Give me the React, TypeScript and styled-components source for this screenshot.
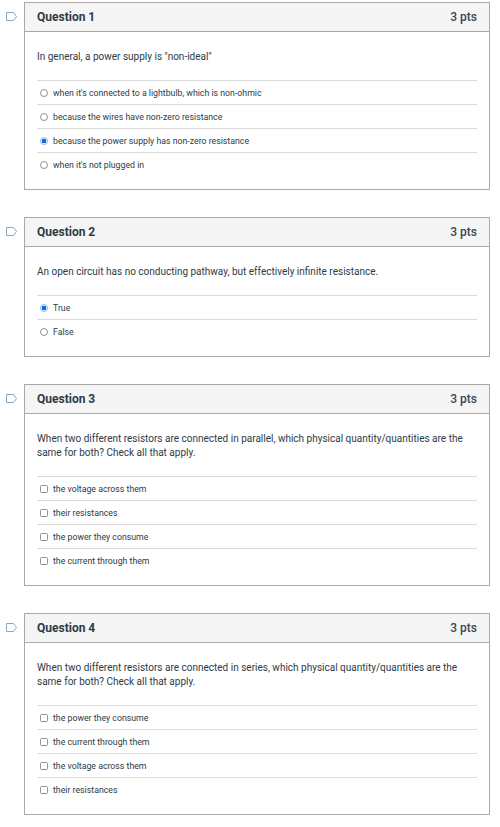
import React from 'react';
import styled, { createGlobalStyle } from 'styled-components';

const GlobalStyle = createGlobalStyle`
  html, body {
    margin: 0;
    padding: 0;
    background: #fff;
  }

  body {
    font-family: Roboto, 'Liberation Sans', Arial, sans-serif;
    color: #2d3b45;
  }
`;

const Page = styled.div`
  width: 500px;
  padding: 2px 10px 0 0;
  box-sizing: border-box;
`;

const QuestionRow = styled.div`
  display: flex;
  margin-bottom: 27px;
`;

const Flag = styled.div`
  width: 24px;
  flex: none;
  padding: 10px 0 0 6px;
  box-sizing: border-box;

  svg {
    display: block;
  }
`;

const Card = styled.div`
  flex: 1;
  border: 1px solid #a9a9a9;
  background: #fff;
`;

const Header = styled.div`
  height: 28px;
  background: #f5f5f5;
  border-bottom: 1px solid #a9a9a9;
  display: flex;
  justify-content: space-between;
  align-items: center;
  padding: 0 12px;

  h3 {
    margin: 0;
    font-size: 12px;
    font-weight: 700;
    color: #2d3b45;
  }

  .points {
    font-size: 12px;
    font-weight: 500;
    color: #3b4650;
  }
`;

const Body = styled.div`
  padding: 18px 12px 13px;
`;

const Prompt = styled.p`
  margin: 0 0 16px;
  font-size: 10px;
  line-height: 14px;
  color: #2d3b45;
`;

const Answer = styled.div`
  height: 23px;
  border-top: 1px solid #dcdcdc;
  display: flex;
  align-items: center;
  gap: 5px;
  padding-left: 3px;
  font-size: 8.75px;
  color: #2d3b45;
`;

const Control = styled.span<{ $type: 'radio' | 'checkbox'; $checked?: boolean }>`
  width: 8px;
  height: 8px;
  flex: none;
  box-sizing: border-box;
  border-radius: ${(p) => (p.$type === 'radio' ? '50%' : '1.5px')};
  border: 1px solid ${(p) => (p.$checked ? '#8fb8f0' : '#8d959a')};
  background: ${(p) =>
    p.$checked ? 'radial-gradient(circle, #0b6fe3 0 2.2px, #fff 2.6px)' : '#fff'};
`;

interface Question {
  title: string;
  prompt: string;
  type: 'radio' | 'checkbox';
  answers: string[];
  selected?: number;
}

const questions: Question[] = [
  {
    title: 'Question 1',
    prompt: 'In general, a power supply is "non-ideal"',
    type: 'radio',
    answers: [
      "when it's connected to a lightbulb, which is non-ohmic",
      'because the wires have non-zero resistance',
      'because the power supply has non-zero resistance',
      "when it's not plugged in",
    ],
    selected: 2,
  },
  {
    title: 'Question 2',
    prompt: 'An open circuit has no conducting pathway, but effectively infinite resistance.',
    type: 'radio',
    answers: ['True', 'False'],
    selected: 0,
  },
  {
    title: 'Question 3',
    prompt:
      'When two different resistors are connected in parallel, which physical quantity/quantities are the same for both? Check all that apply.',
    type: 'checkbox',
    answers: [
      'the voltage across them',
      'their resistances',
      'the power they consume',
      'the current through them',
    ],
  },
  {
    title: 'Question 4',
    prompt:
      'When two different resistors are connected in series, which physical quantity/quantities are the same for both? Check all that apply.',
    type: 'checkbox',
    answers: [
      'the power they consume',
      'the current through them',
      'the voltage across them',
      'their resistances',
    ],
  },
];

const FlagIcon = () => (
  <svg width='12' height='9' viewBox='0 0 12 9'>
    <path
      d='M0.5 0.5 H7.5 L10.5 4.5 L7.5 8.5 H0.5 Z'
      fill='none'
      stroke='#8aa6c4'
      strokeWidth='1'
      strokeLinejoin='miter'
    />
  </svg>
);

const App = () => {
  return (
    <>
      <GlobalStyle />
      <Page>
        {questions.map((q) => (
          <QuestionRow key={q.title}>
            <Flag>
              <FlagIcon />
            </Flag>
            <Card>
              <Header>
                <h3>{q.title}</h3>
                <span className='points'>3 pts</span>
              </Header>
              <Body>
                <Prompt>{q.prompt}</Prompt>
                {q.answers.map((a, i) => (
                  <Answer key={a}>
                    <Control $type={q.type} $checked={q.selected === i} />
                    <span>{a}</span>
                  </Answer>
                ))}
              </Body>
            </Card>
          </QuestionRow>
        ))}
      </Page>
    </>
  );
};

export default App;
